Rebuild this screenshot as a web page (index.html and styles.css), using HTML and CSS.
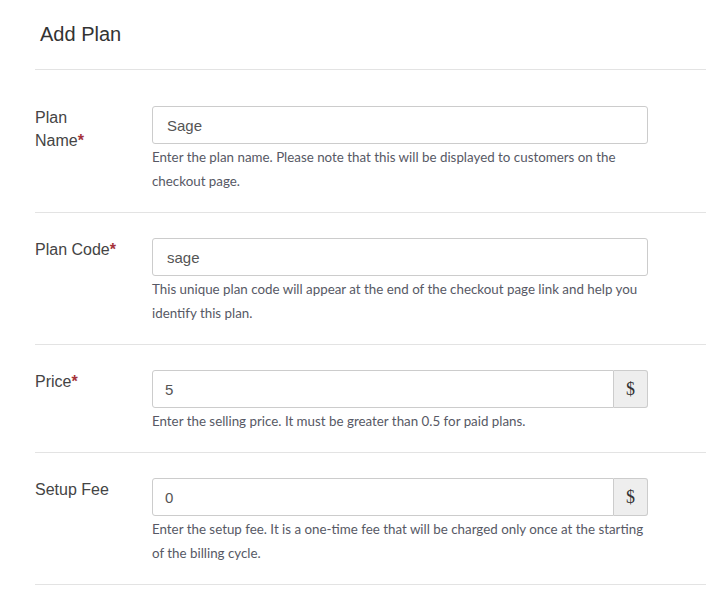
FILE: index.html
```html
<!DOCTYPE html>
<html>
<head>
<meta charset="utf-8">
<link rel="stylesheet" href="styles.css">
</head>
<body>
<div class="page">
  <div class="header"><h1 class="title">Add Plan</h1></div>
  <div class="form">
    <div class="row">
      <label class="label">Plan Name<span class="req">*</span></label>
      <div class="field">
        <div class="input">Sage</div>
        <p class="help">Enter the plan name. Please note that this will be displayed to customers on the checkout page.</p>
      </div>
    </div>
    <div class="row">
      <label class="label">Plan Code<span class="req">*</span></label>
      <div class="field">
        <div class="input">sage</div>
        <p class="help">This unique plan code will appear at the end of the checkout page link and help you identify this plan.</p>
      </div>
    </div>
    <div class="row">
      <label class="label">Price<span class="req">*</span></label>
      <div class="field">
        <div class="group"><div class="input grouped">5</div><span class="addon">$</span></div>
        <p class="help">Enter the selling price. It must be greater than 0.5 for paid plans.</p>
      </div>
    </div>
    <div class="row">
      <label class="label">Setup Fee</label>
      <div class="field">
        <div class="group"><div class="input grouped">0</div><span class="addon">$</span></div>
        <p class="help">Enter the setup fee. It is a one-time fee that will be charged only once at the starting of the billing cycle.</p>
      </div>
    </div>
  </div>
</div>
</body>
</html>
```

FILE: styles.css
```css
html, body {
  margin: 0;
  padding: 0;
  background: #ffffff;
}
.page {
  margin-left: 35px;
  width: 671px;
  font-family: "Liberation Sans", Arial, sans-serif;
}
.header {
  border-bottom: 1px solid #e3e3e3;
  padding-left: 5px;
  box-sizing: border-box;
  height: 70px;
}
.title {
  margin: 0;
  padding-top: 21px;
  font-size: 20px;
  font-weight: normal;
  line-height: 26px;
  color: #333333;
}
.form {
  padding-top: 11px;
}
.row {
  display: grid;
  grid-template-columns: 117px 496px;
  padding: 25px 0 19px;
  border-bottom: 1px solid #e3e3e3;
}
.label {
  width: 83px;
  font-size: 16px;
  line-height: 23px;
  color: #444444;
}
.req {
  color: #a5333a;
  font-weight: bold;
}
.field {
  display: flex;
  flex-direction: column;
}
.input {
  height: 38px;
  box-sizing: border-box;
  border: 1px solid #cccccc;
  border-radius: 3px;
  padding: 0 12px 0 14px;
  display: flex;
  align-items: center;
  font-size: 15px;
  color: #555555;
}
.group {
  display: flex;
}
.input.grouped {
  flex: 1;
  padding-left: 12px;
  border-radius: 3px 0 0 3px;
}
.addon {
  width: 34px;
  height: 38px;
  box-sizing: border-box;
  border: 1px solid #cccccc;
  border-left: none;
  border-radius: 0 3px 3px 0;
  background: #eeeeee;
  display: flex;
  align-items: center;
  justify-content: center;
  font-family: "Liberation Serif", "Times New Roman", serif;
  font-size: 18px;
  color: #333333;
}
.help {
  margin: 1px 0 0;
  font-family: Lato, "Open Sans", sans-serif;
  font-size: 13.35px;
  line-height: 24px;
  color: #575965;
}
```
